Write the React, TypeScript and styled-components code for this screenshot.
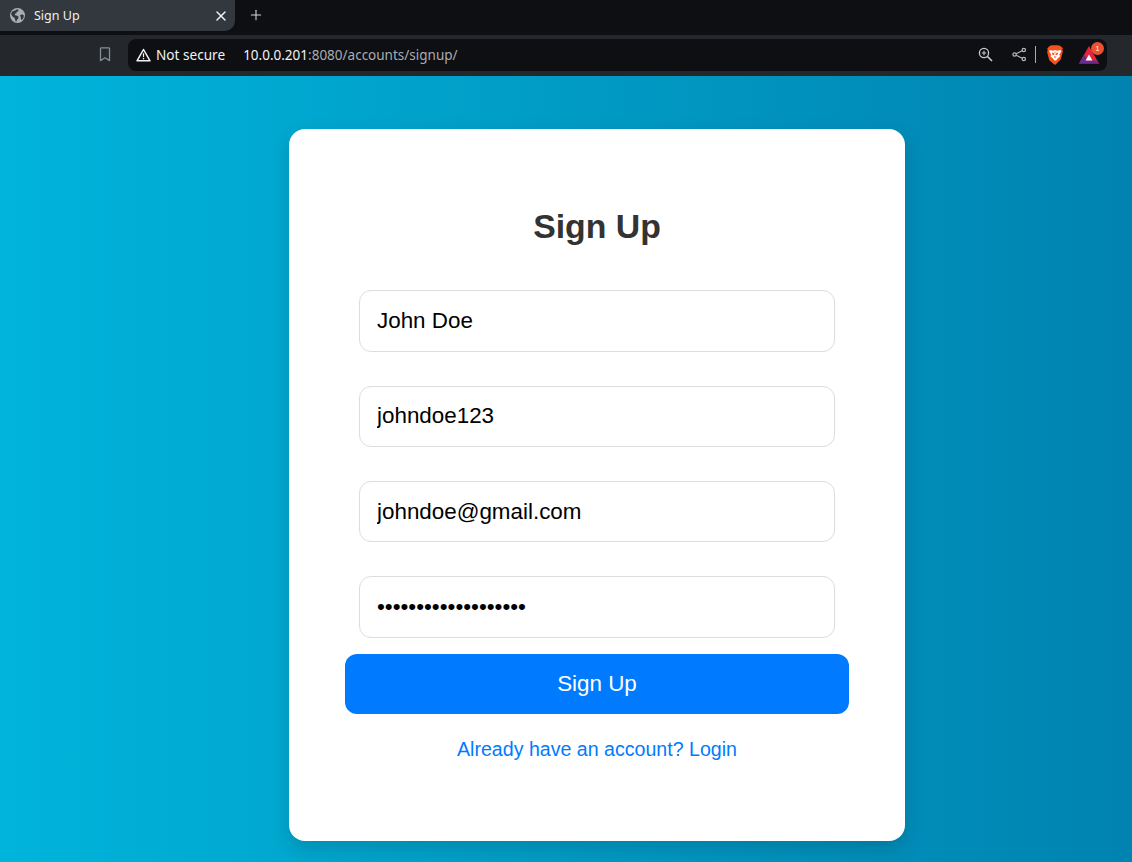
import React from "react";
import styled, { createGlobalStyle } from "styled-components";
import { X, Plus } from "lucide-react";

const Global = createGlobalStyle`
  html, body { margin: 0; padding: 0; height: 100%; overflow: hidden; }
  #root { height: 100%; }
  * { box-sizing: border-box; }
`;
const Page = styled.div`
  width: 1132px; height: 862px; display: flex; flex-direction: column;
  font-family: "Liberation Sans", Arial, sans-serif;
`;
const TabStrip = styled.div`
  height: 35px; background: #0e0f13; display: flex; align-items: flex-start; flex: none;
`;
const Tab = styled.div`
  width: 235px; height: 31px; background: #32383e; border-radius: 0 0 10px 0;
  display: flex; align-items: center; padding: 0 6px 0 10px; color: #eef0f2;
  font: 12.5px "Noto Sans", sans-serif;
`;
const TabTitle = styled.span` margin-left: 9px; flex: 1; `;
const NewTab = styled.div` margin: 7px 0 0 13px; display: flex; color: #d5d7da; `;
const Toolbar = styled.div`
  height: 41px; flex: none; background: #24282d; display: flex; align-items: center;
  padding: 0 25px 2px 99px;
`;
const BookmarkSlot = styled.div` width: 29px; display: flex; `;
const Omnibox = styled.div`
  flex: 1; height: 32px; background: #0e0f13; border-radius: 8px; display: flex; align-items: center;
  padding: 0 8px 0 8px; color: #f2f3f4; font: 13.6px "Noto Sans", sans-serif;
`;
const Warn = styled.span` display: flex; margin-right: 5px; `;
const Url = styled.span` margin-left: 18px; flex: 1; font-size: 13.5px; `;
const UrlDim = styled.span` color: #a9acb0; `;
const ActionIcon = styled.span<{ $gap: number }>` display: flex; margin-right: ${p => p.$gap}px; `;
const Divider = styled.span` width: 1px; height: 17px; background: #a8abaf; margin-right: 10px; `;
const RewardsWrap = styled.span` position: relative; display: flex; width: 20px; height: 18px; margin-top: 1px; `;
const Badge = styled.span`
  position: absolute; top: -4px; right: -5px; width: 13px; height: 13px; border-radius: 50%;
  background: #f1502f; color: #fff; font: 7px "Liberation Sans", sans-serif; display: flex; align-items: center; justify-content: center;
`;
const Main = styled.main`
  flex: 1; background: linear-gradient(to right, #00b4db, #0083b0); padding: 53px 0 0 62px;
  display: flex; justify-content: center; align-items: flex-start;
`;
const Card = styled.div`
  width: 616px; height: 712px; background: #fff; border-radius: 16px; padding: 77px 56px 0;
  box-shadow: 0 8px 20px rgba(0,0,0,.15); display: flex; flex-direction: column; align-items: center;
`;
const Title = styled.h1`
  margin: 0 0 44.3px; font-size: 33.8px; line-height: 40px; font-weight: 700; color: #333; text-align: center;
`;
const Field = styled.input`
  display: block; width: 476px; height: 61.5px; margin-bottom: 33.8px; padding: 0 17px;
  border: 1px solid #ddd; border-radius: 12px; background: #fff; color: #000; outline: none;
  font: 22.4px "Liberation Sans", sans-serif;
  &:last-of-type { margin-bottom: 16px; }
`;
const Submit = styled.button`
  width: 504px; height: 60px; flex: none; border: 0; border-radius: 12px; background: #007bff; color: #fff;
  font: 22.4px "Liberation Sans", sans-serif;
`;
const LoginLink = styled.a`
  margin-top: 22px; color: #007bff; font-size: 19.6px; line-height: 26px; text-decoration: none;
`;

const GlobeIcon = () => (
  <svg width="15" height="15" viewBox="0 0 15 15">
    <circle cx="7.5" cy="7.5" r="7.5" fill="#a9aeb3" />
    <path d="M2.2 3.4 5 2.6l2.2-1.4 1.6.9-1 1.4-1.2.5-.3 1.3-1.7.6.6 1.4 2 .4 1.4 1-.3 1.8-1.3 1.2-.5 1.9-1-.3-.7-3.1L2.4 8.2 1 6z" fill="#32383e" />
    <path d="M10 7.2l2-.9 1.9 1.1-.5 2.6-1.7 2.3-.8-1.5-.2-1.9z" fill="#32383e" />
  </svg>
);
const BookmarkIcon = () => (
  <svg width="12" height="15" viewBox="0 0 12 15" fill="none">
    <path d="M1.5 1.6c0-.4.3-.8.8-.8h7.4c.5 0 .8.4.8.8v12L6 10.8l-4.5 2.8z" stroke="#868d92" strokeWidth="1.3" strokeLinejoin="round" />
  </svg>
);
const WarnIcon = () => (
  <svg width="15" height="14" viewBox="0 0 15 14" fill="none">
    <path d="M7.5 1.5 14 12.8H1z" stroke="#f2f3f4" strokeWidth="1.5" strokeLinejoin="round" />
    <path d="M7.5 5.2v3.8" stroke="#f2f3f4" strokeWidth="1.2" />
    <circle cx="7.5" cy="10.6" r=".8" fill="#f2f3f4" />
  </svg>
);
const ZoomGlass = () => (
  <svg width="15" height="15" viewBox="0 0 15 15" fill="none" stroke="#c9cbce">
    <circle cx="6" cy="6" r="4.6" strokeWidth="1.3" />
    <path d="M9.5 9.5 14 14" strokeWidth="1.6" />
    <path d="M3.8 6h4.4M6 3.8v4.4" strokeWidth="1.1" />
  </svg>
);
const ShareNodes = () => (
  <svg width="15" height="15" viewBox="0 0 15 15" fill="none" stroke="#b5b8bb" strokeWidth="1.2">
    <circle cx="2.6" cy="7.5" r="1.7" />
    <circle cx="11.8" cy="3" r="1.7" />
    <circle cx="11.8" cy="12" r="1.7" />
    <path d="M4.2 6.7 10.2 3.8M4.2 8.3l6 2.9" />
  </svg>
);
const BraveLion = () => (
  <svg width="18" height="20" viewBox="0 0 18 20">
    <path d="M3.5 1 6 .2h6L14.5 1l2.3 2.2-.5 1.5.6 1.6-2 7.5c-.3 1-1 1.8-1.9 2.4L9.6 19.4c-.4.3-.8.3-1.2 0l-3.4-2.6c-.9-.6-1.6-1.4-1.9-2.4l-2-7.5.6-1.6-.5-1.5z" fill="#f4511e" />
    <path d="M3.6 5 6.8 5.7 9 5l2.2.7L14.4 5l.8 1.4-1.9 3.3.8 1.6-2.5 2.2-1.5 2.1H8.4l-1.5-2.1-2.5-2.2.8-1.6-1.9-3.3z" fill="#fff" />
    <path d="M5.8 7.6l2 .5.3 1.6-1.4.5zM12.2 7.6l-2 .5-.3 1.6 1.4.5zM7.6 11.6h2.8L9 13.2zM8.7 6.2h.6v4h-.6z" fill="#f4511e" />
  </svg>
);
const RewardsTriangle = () => (
  <svg width="20" height="18" viewBox="0 0 20 18">
    <path d="M10 0 20 17.5H0z" fill="#e3243c" />
    <path d="M0 17.5 5 9l5 5.5h8.3l1.7 3z" fill="#6a2a8c" />
    <path d="M10 8.5 13.4 14.5H6.6z" fill="#fff" />
  </svg>
);

export default function App() {
  return (
    <Page>
      <Global />
      <TabStrip>
        <Tab>
          <GlobeIcon />
          <TabTitle>Sign Up</TabTitle>
          <X size={16} color="#f0f1f2" strokeWidth={2.2} />
        </Tab>
        <NewTab><Plus size={16} strokeWidth={1.6} /></NewTab>
      </TabStrip>
      <Toolbar>
        <BookmarkSlot><BookmarkIcon /></BookmarkSlot>
        <Omnibox>
          <Warn><WarnIcon /></Warn>
          Not secure
          <Url>10.0.0.201<UrlDim>:8080/accounts/signup/</UrlDim></Url>
          <ActionIcon $gap={19}><ZoomGlass /></ActionIcon>
          <ActionIcon $gap={8}><ShareNodes /></ActionIcon>
          <Divider />
          <ActionIcon $gap={15}><BraveLion /></ActionIcon>
          <RewardsWrap><RewardsTriangle /><Badge>1</Badge></RewardsWrap>
        </Omnibox>
      </Toolbar>
      <Main>
        <Card>
          <Title>Sign Up</Title>
          <Field defaultValue="John Doe" />
          <Field defaultValue="johndoe123" />
          <Field defaultValue="johndoe@gmail.com" />
          <Field type="password" defaultValue="johndoe123456789012" />
          <Submit>Sign Up</Submit>
          <LoginLink href="#">Already have an account? Login</LoginLink>
        </Card>
      </Main>
    </Page>
  );
}
